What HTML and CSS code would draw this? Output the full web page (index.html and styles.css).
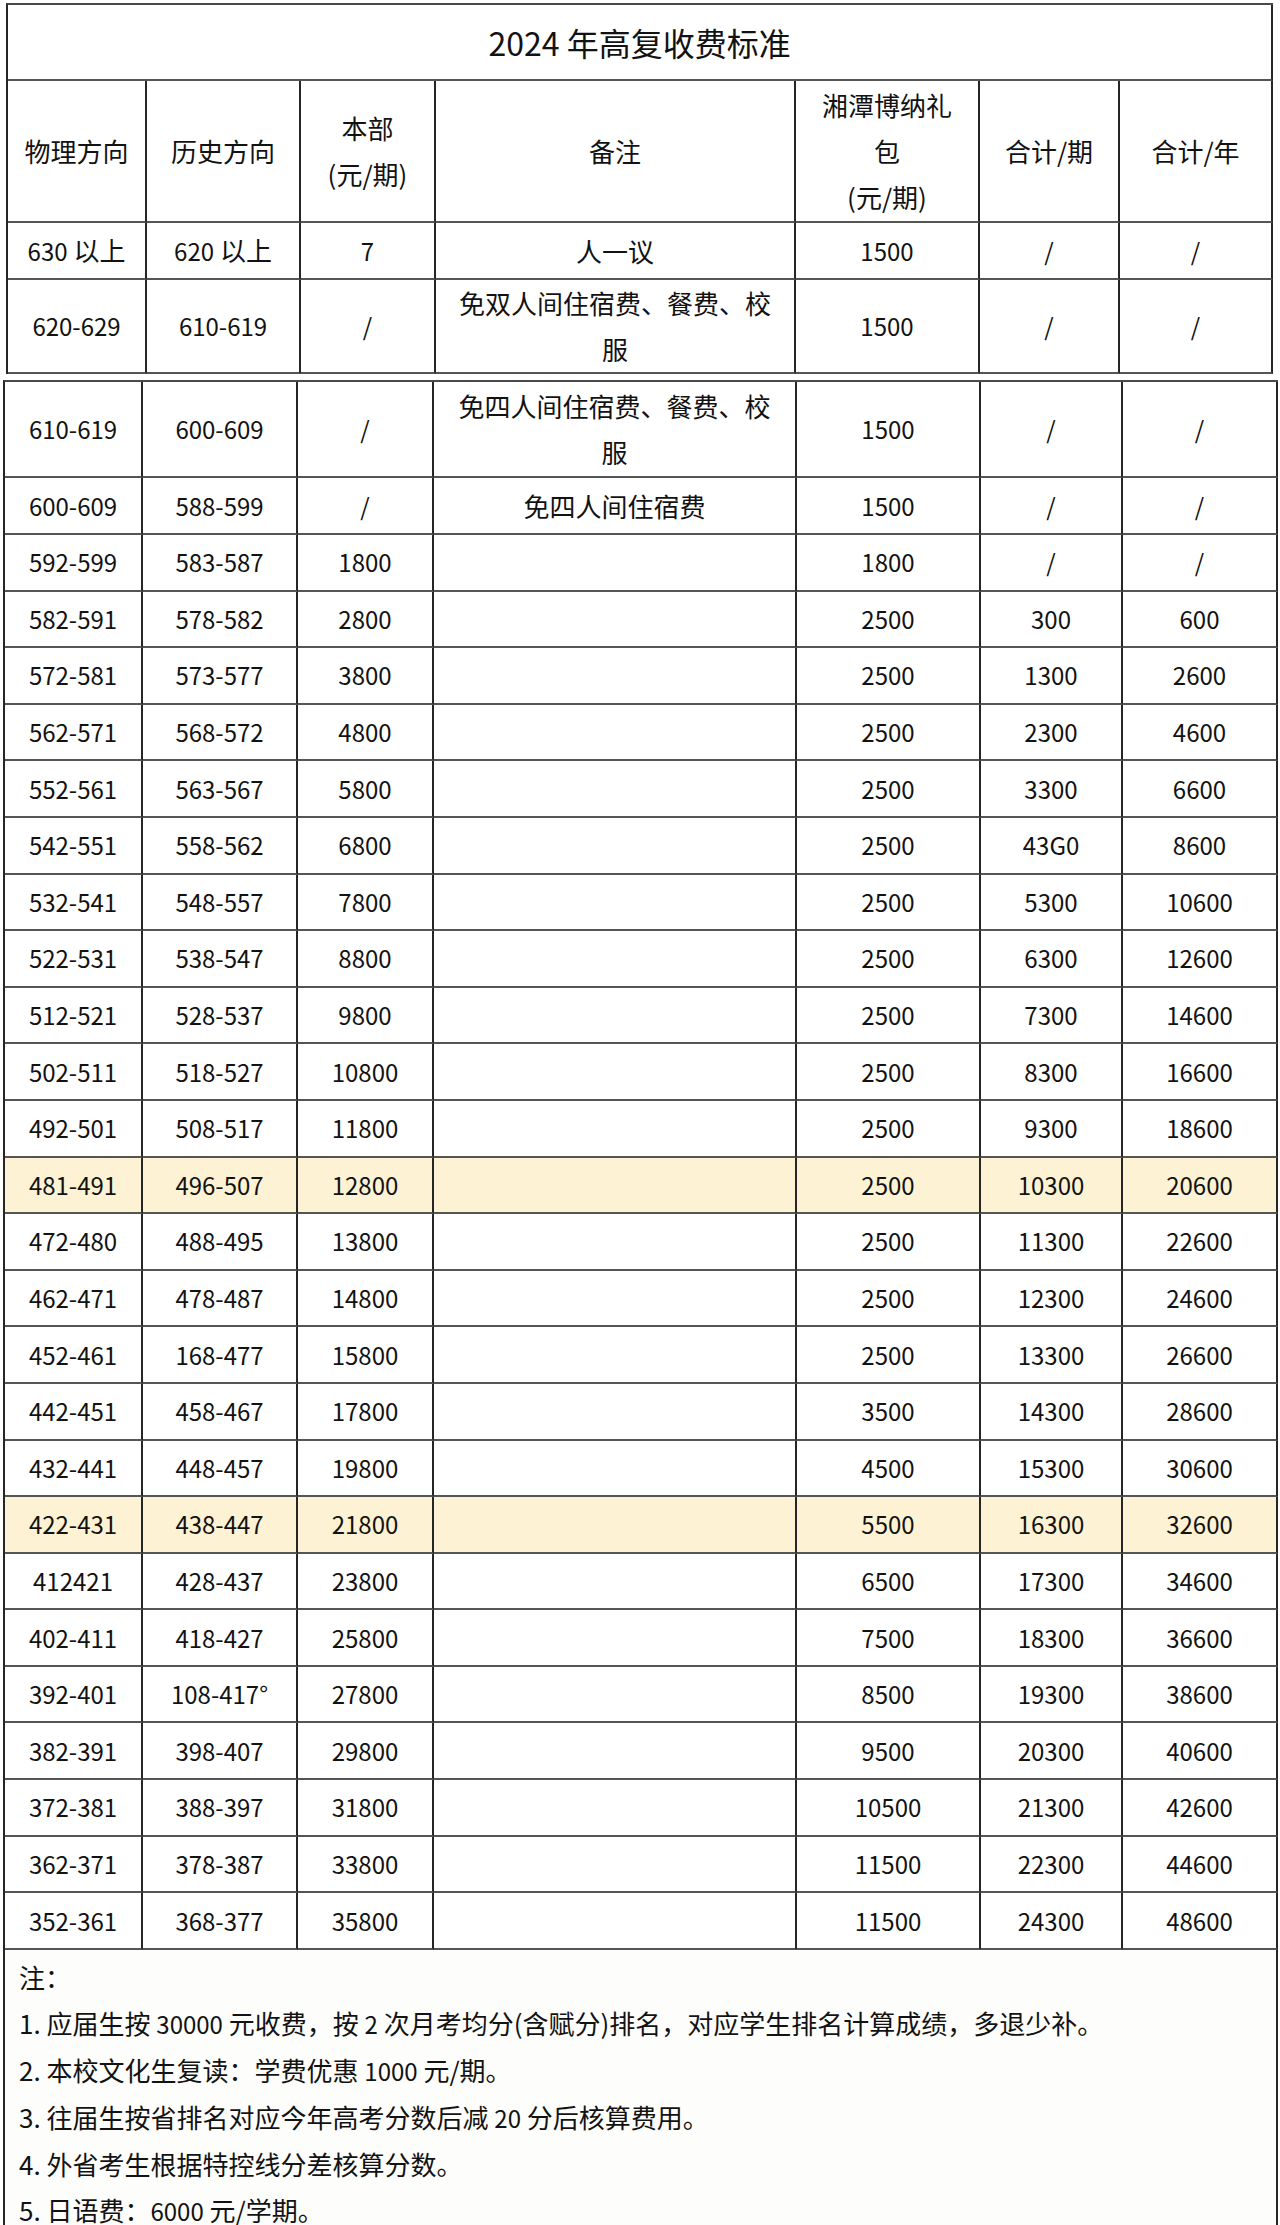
FILE: index.html
```html
<!DOCTYPE html>
<html lang="zh-CN">
<head>
<meta charset="utf-8">
<title>2024 年高复收费标准</title>
<link rel="stylesheet" href="styles.css">
</head>
<body>
<table class="fee fee-top">
  <colgroup>
    <col class="c1"><col class="c2"><col class="c3"><col class="c4"><col class="c5"><col class="c6"><col class="c7">
  </colgroup>
  <tr class="r-title"><td class="title" colspan="7">2024 年高复收费标准</td></tr>
  <tr class="r-head">
    <td class="zh">物理方向</td>
    <td class="zh">历史方向</td>
    <td class="zh multi">本部<br>(元/期)</td>
    <td class="zh">备注</td>
    <td class="zh multi wrap5">湘潭博纳礼包<br>(元/期)</td>
    <td class="zh">合计/期</td>
    <td class="zh">合计/年</td>
  </tr>
  <tr class="r1">
    <td class="zh"><span class="n">630</span> 以上</td>
    <td class="zh"><span class="n">620</span> 以上</td>
    <td>7</td>
    <td class="zh">人一议</td>
    <td>1500</td>
    <td>/</td>
    <td>/</td>
  </tr>
  <tr class="r2">
    <td>620-629</td>
    <td>610-619</td>
    <td>/</td>
    <td class="zh multi note">免双人间住宿费、餐费、校服</td>
    <td>1500</td>
    <td>/</td>
    <td>/</td>
  </tr>
</table>

<table class="fee fee-bottom">
  <colgroup>
    <col class="d1"><col class="d2"><col class="d3"><col class="d4"><col class="d5"><col class="d6"><col class="d7">
  </colgroup>
  <tr class="r2b">
    <td>610-619</td>
    <td>600-609</td>
    <td>/</td>
    <td class="zh multi note">免四人间住宿费、餐费、校服</td>
    <td>1500</td>
    <td>/</td>
    <td>/</td>
  </tr>
  <tr class="r1b">
    <td>600-609</td><td>588-599</td><td>/</td><td class="zh">免四人间住宿费</td><td>1500</td><td>/</td><td>/</td>
  </tr>
  <tr class="row"><td>592-599</td><td>583-587</td><td>1800</td><td></td><td>1800</td><td>/</td><td>/</td></tr>
  <tr class="row"><td>582-591</td><td>578-582</td><td>2800</td><td></td><td>2500</td><td>300</td><td>600</td></tr>
  <tr class="row"><td>572-581</td><td>573-577</td><td>3800</td><td></td><td>2500</td><td>1300</td><td>2600</td></tr>
  <tr class="row"><td>562-571</td><td>568-572</td><td>4800</td><td></td><td>2500</td><td>2300</td><td>4600</td></tr>
  <tr class="row"><td>552-561</td><td>563-567</td><td>5800</td><td></td><td>2500</td><td>3300</td><td>6600</td></tr>
  <tr class="row"><td>542-551</td><td>558-562</td><td>6800</td><td></td><td>2500</td><td>43G0</td><td>8600</td></tr>
  <tr class="row"><td>532-541</td><td>548-557</td><td>7800</td><td></td><td>2500</td><td>5300</td><td>10600</td></tr>
  <tr class="row"><td>522-531</td><td>538-547</td><td>8800</td><td></td><td>2500</td><td>6300</td><td>12600</td></tr>
  <tr class="row"><td>512-521</td><td>528-537</td><td>9800</td><td></td><td>2500</td><td>7300</td><td>14600</td></tr>
  <tr class="row"><td>502-511</td><td>518-527</td><td>10800</td><td></td><td>2500</td><td>8300</td><td>16600</td></tr>
  <tr class="row"><td>492-501</td><td>508-517</td><td>11800</td><td></td><td>2500</td><td>9300</td><td>18600</td></tr>
  <tr class="row hl"><td>481-491</td><td>496-507</td><td>12800</td><td></td><td>2500</td><td>10300</td><td>20600</td></tr>
  <tr class="row"><td>472-480</td><td>488-495</td><td>13800</td><td></td><td>2500</td><td>11300</td><td>22600</td></tr>
  <tr class="row"><td>462-471</td><td>478-487</td><td>14800</td><td></td><td>2500</td><td>12300</td><td>24600</td></tr>
  <tr class="row"><td>452-461</td><td>168-477</td><td>15800</td><td></td><td>2500</td><td>13300</td><td>26600</td></tr>
  <tr class="row"><td>442-451</td><td>458-467</td><td>17800</td><td></td><td>3500</td><td>14300</td><td>28600</td></tr>
  <tr class="row"><td>432-441</td><td>448-457</td><td>19800</td><td></td><td>4500</td><td>15300</td><td>30600</td></tr>
  <tr class="row hl"><td>422-431</td><td>438-447</td><td>21800</td><td></td><td>5500</td><td>16300</td><td>32600</td></tr>
  <tr class="row"><td>412421</td><td>428-437</td><td>23800</td><td></td><td>6500</td><td>17300</td><td>34600</td></tr>
  <tr class="row"><td>402-411</td><td>418-427</td><td>25800</td><td></td><td>7500</td><td>18300</td><td>36600</td></tr>
  <tr class="row"><td>392-401</td><td>108-417°</td><td>27800</td><td></td><td>8500</td><td>19300</td><td>38600</td></tr>
  <tr class="row"><td>382-391</td><td>398-407</td><td>29800</td><td></td><td>9500</td><td>20300</td><td>40600</td></tr>
  <tr class="row"><td>372-381</td><td>388-397</td><td>31800</td><td></td><td>10500</td><td>21300</td><td>42600</td></tr>
  <tr class="row"><td>362-371</td><td>378-387</td><td>33800</td><td></td><td>11500</td><td>22300</td><td>44600</td></tr>
  <tr class="row"><td>352-361</td><td>368-377</td><td>35800</td><td></td><td>11500</td><td>24300</td><td>48600</td></tr>
  <tr class="r-notes">
    <td class="notes" colspan="7">
      <p>注：</p>
      <p>1. 应届生按 <span class="n">30000</span> 元收费，按 <span class="n">2</span> 次月考均分(含赋分)排名，对应学生排名计算成绩，多退少补。</p>
      <p>2. 本校文化生复读：学费优惠 <span class="n">1000</span> 元/期。</p>
      <p>3. 往届生按省排名对应今年高考分数后减 <span class="n">20</span> 分后核算费用。</p>
      <p>4. 外省考生根据特控线分差核算分数。</p>
      <p>5. 日语费：<span class="n">6000</span> 元/学期。</p>
    </td>
  </tr>
</table>
</body>
</html>
```

FILE: styles.css
```css
html, body {
  margin: 0;
  padding: 0;
  background: #ffffff;
}

body {
  width: 1280px;
  height: 2225px;
  overflow: hidden;
  font-family: "Noto Sans CJK SC", "Noto Sans", sans-serif;
  color: #121212;
}

.fee {
  border-collapse: separate;
  border-spacing: 0;
  table-layout: fixed;
  border-top: 2px solid #4a4a4a;
  border-left: 2px solid #262626;
}

.fee td {
  box-sizing: border-box;
  border-right: 2px solid #262626;
  border-bottom: 2px solid #555555;
  padding: 0 4px;
  text-align: center;
  vertical-align: middle;
  font-size: 24px;
  line-height: 30px;
  white-space: nowrap;
}

.fee td.zh {
  font-size: 26px;
}

.fee td.multi {
  white-space: normal;
  line-height: 46px;
}

.fee td.note {
  padding: 0 16px;
}

.fee td.wrap5 {
  padding: 0 20px;
}

.n {
  font-size: 24px;
}

/* top table */
.fee-top {
  margin: 3px 0 0 6px;
  width: 1267px;
}
.c1 { width: 139px; }
.c2 { width: 154px; }
.c3 { width: 135px; }
.c4 { width: 360px; }
.c5 { width: 184px; }
.c6 { width: 140px; }
.c7 { width: 153px; }

.r-title { height: 76px; }
.r-head { height: 142px; }
.r1 { height: 57px; }
.r2 { height: 94px; }

.fee td.title {
  font-size: 32px;
  line-height: 40px;
}

/* bottom table */
.fee-bottom {
  margin: 6px 0 0 3px;
  width: 1275px;
}
.d1 { width: 138px; }
.d2 { width: 155px; }
.d3 { width: 136px; }
.d4 { width: 363px; }
.d5 { width: 184px; }
.d6 { width: 142px; }
.d7 { width: 155px; }

.r2b { height: 96px; }
.r1b { height: 57px; }
.row { height: 56.6px; }

.row.hl td {
  background: #fdf2d3;
}

.r-notes { height: 275px; }

.fee td.notes {
  border-bottom: none;
  background: #fdfdfb;
  text-align: left;
  vertical-align: top;
  white-space: normal;
  padding: 4px 14px 0 14px;
  font-size: 26px;
  line-height: 46px;
}

.notes p {
  margin: 0;
}
```
